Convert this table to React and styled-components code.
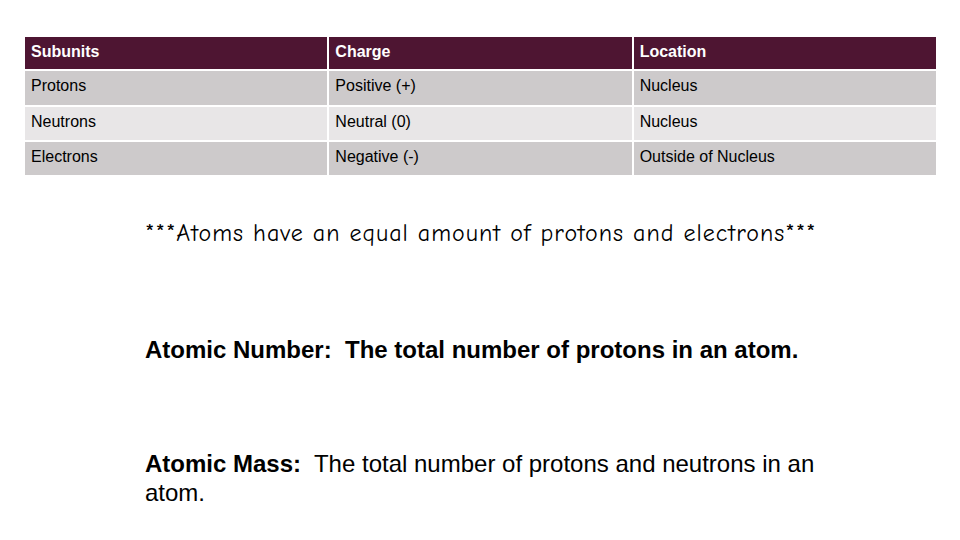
import React from 'react';
import styled, { createGlobalStyle } from 'styled-components';

const GlobalStyle = createGlobalStyle`
  html, body {
    margin: 0;
    padding: 0;
    background: #ffffff;
  }
  body {
    font-family: "Liberation Sans", Arial, sans-serif;
    color: #000000;
  }
`;

const Slide = styled.div`
  width: 960px;
  height: 540px;
  box-sizing: border-box;
  padding: 35px 24px 0 23px;
  overflow: hidden;
`;

const Table = styled.table`
  width: 915px;
  border-collapse: separate;
  border-spacing: 2px;
  font-size: 16px;
`;

const HeadCell = styled.th`
  background: #4e1532;
  color: #ffffff;
  font-weight: bold;
  text-align: left;
  height: 29px;
  padding: 0 6px 3px;
  width: 33.33%;
  vertical-align: middle;
`;

const Cell = styled.td`
  background: ${p => (p.$light ? '#e8e6e7' : '#cdcacb')};
  height: ${p => p.$h - 4}px;
  padding: 0 6px 4px;
  vertical-align: middle;
`;

const Body = styled.div`
  padding: 0 0 0 122px;
`;

const Note = styled.p`
  margin: 42px 0 0;
  font-family: "Comic Sans MS", "Comic Neue", "DejaVu Sans", sans-serif;
  font-size: 24px;
  letter-spacing: 1px;
  line-height: 28px;
  white-space: nowrap;
`;

const Definition = styled.p`
  margin: ${p => p.$top}px 0 0;
  width: 690px;
  font-size: 24px;
  line-height: 29px;
  font-weight: ${p => (p.$bold ? 'bold' : 'normal')};
`;

const Term = styled.span`
  font-weight: bold;
`;

const rows = [
  ['Protons', 'Positive (+)', 'Nucleus'],
  ['Neutrons', 'Neutral (0)', 'Nucleus'],
  ['Electrons', 'Negative (-)', 'Outside of Nucleus'],
];

export default function App() {
  return (
    <>
      <GlobalStyle />
      <Slide>
        <Table>
          <thead>
            <tr>
              <HeadCell>Subunits</HeadCell>
              <HeadCell>Charge</HeadCell>
              <HeadCell>Location</HeadCell>
            </tr>
          </thead>
          <tbody>
            {rows.map((r, i) => (
              <tr key={r[0]}>
                {r.map(c => (
                  <Cell key={c} $light={i === 1} $h={i === 0 ? 34 : 33}>{c}</Cell>
                ))}
              </tr>
            ))}
          </tbody>
        </Table>
        <Body>
          <Note>***Atoms have an equal amount of protons and electrons***</Note>
          <Definition $top={88} $bold>
            Atomic Number:&nbsp; The total number of protons in an atom.
          </Definition>
          <Definition $top={85}>
            <Term>Atomic Mass:</Term>&nbsp; The total number of protons and neutrons in an atom.
          </Definition>
        </Body>
      </Slide>
    </>
  );
}
